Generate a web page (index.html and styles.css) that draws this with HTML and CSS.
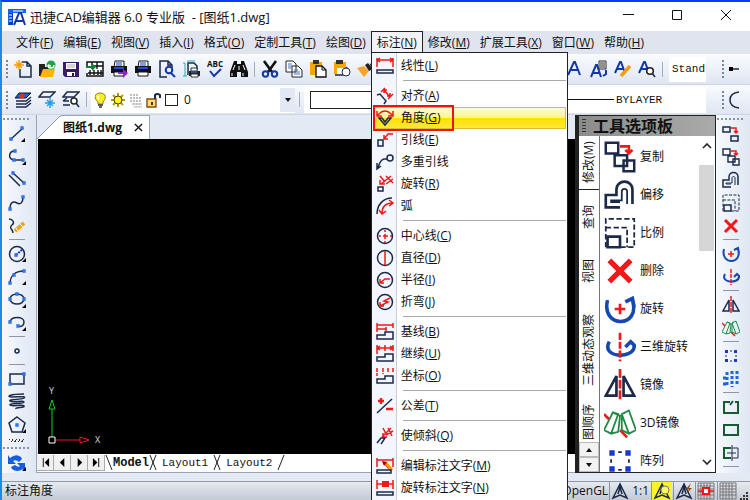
FILE: index.html
```
<!DOCTYPE html>
<html lang="zh-CN">
  <head>
    <meta charset="UTF-8" />
    <meta name="viewport" content="width=device-width, initial-scale=1.0" />
    <title>迅捷CAD编辑器 6.0 专业版 - [图纸1.dwg]</title>
    <link rel="stylesheet" href="styles.css">
  </head>
  <body>
    <!-- icon set -->
    <svg class="defs" aria-hidden="true">
      <symbol id="logo" viewBox="0 0 18 18"><path d="M0 1h18v4H5v12H0z" fill="#1565e8"/><path d="M1 5h4v12H1z" fill="#0a3cc8"/><path d="M1 7h3M1 10h3M1 13h3M5 3h10" stroke="#fff"/><path class="b" d="M6 17L11 5h2l4 12M8 13h8" stroke-width="2.5"/></symbol>
      <symbol id="new" viewBox="0 0 18 18"><path class="k" d="M8 2h5l4 4v11H6V9M13 2v4h4"/><path d="M5 0v10M0 5h10M2 2l6 6M8 2L2 8" stroke="#ff9a00" stroke-width="1.4"/></symbol>
      <symbol id="open" viewBox="0 0 18 18"><path d="M1 4h6v3h8v9H1z" fill="#222"/><path d="M2 17l3-8h12l-2 8z" fill="#ffb400"/><circle cx="13" cy="5" r="4.5" fill="#21a04a"/><path d="M10 5a3 3 0 0 0 6 0M10 5l3 1" stroke="#fff" fill="none" stroke-width="1.4"/></symbol>
      <symbol id="save" viewBox="0 0 18 18"><path d="M1 2h16v15H3l-2-2z" fill="#3b1a66"/><path d="M4 3h10v6H4zM5 12h8v4H5z" fill="#fff"/><path d="M5 5h8M5 7h8" stroke="#aaa"/><path d="M10 13h2v3h-2z" fill="#222"/></symbol>
      <symbol id="acis" viewBox="0 0 18 18"><path d="M1 7V2h16v14H1v-3" fill="#fff" stroke="#111" stroke-width="1.5"/><path d="M6 2v7M11 2v7M6 6h11M2 13h15M4 10v5M8 10v5M12 10v5M15 10v5" stroke="#111" stroke-width="1.4"/><path d="M0 6h6V3l4 4-4 4V8H0z" fill="#128038"/></symbol>
      <symbol id="print" viewBox="0 0 18 18"><path d="M5 1h9v6H4z" fill="#fff" stroke="#111"/><path d="M6 3h6M6 5h6" stroke="#1a36c8"/><path d="M1 6h16v7H1z" fill="#111"/><path d="M4 7h10v2H4z" fill="#1f4be0"/><path d="M4 12h10v4H4z" fill="#fff" stroke="#111"/></symbol>
      <symbol id="export" viewBox="0 0 18 18"><use href="#print" width="18" height="18"/><path d="M8 12h5V9l5 4-5 5v-4H8z" fill="#8a28c8"/></symbol>
      <symbol id="preview" viewBox="0 0 18 18"><path class="k" d="M9 17H2V1h8l4 4v3M10 1v4h4"/><circle class="b" cx="11" cy="10" r="3.3" stroke-width="2"/><path class="b" d="M13 13l4 4" stroke-width="2.4"/></symbol>
      <symbol id="plot" viewBox="0 0 18 18"><path d="M3 3v13M1 3h2M1 16h4M5 1h8" stroke="#20a8c0" fill="none"/><path class="k" d="M6 15V3h6l3 3v4" stroke-width="1"/><path d="M7 11h11v5H7z" fill="#222"/><path d="M9 8h6v3H9zM9 14h7v3H9z" fill="#fff" stroke="#333"/><path d="M9 12h6" stroke="#2e7be8"/></symbol>
      <symbol id="find" viewBox="0 0 18 18"><path d="M4 1h3v3h4V1h3l4 11v5h-7v-5H7v5H0v-5z" fill="#111"/><path d="M3 10l2-5M15 10l-2-5M2 13v3M13 13v3M9 6v4" stroke="#fff"/></symbol>
      <symbol id="cut" viewBox="0 0 18 18"><path d="M3 1l8 11M15 1L7 12" stroke="#111" stroke-width="2.6"/><circle class="b" cx="4.5" cy="14" r="2.7" stroke-width="2"/><circle class="b" cx="13.5" cy="14" r="2.7" stroke-width="2"/></symbol>
      <symbol id="copy" viewBox="0 0 18 18"><path d="M1 1h7l3 3v8H1zM7 6h6l4 4v7H7z" fill="#fff" stroke="#222"/><path d="M3 4h4M3 6h4M3 8h3M9 10h4M9 12h6M9 14h6" stroke="#4672c8"/></symbol>
      <symbol id="paste" viewBox="0 0 18 18"><path d="M1 2h12v13H1z" fill="#f5a800"/><path d="M4 0h6v4H4z" fill="#333"/><path d="M7 6h6l4 4v7H7z" fill="#fff" stroke="#111" stroke-width="1.3"/><path d="M13 6v4h4" fill="none" stroke="#111"/></symbol>
      <symbol id="pasteb" viewBox="0 0 18 18"><path d="M1 2h12v12H1z" fill="#f5a800"/><path d="M3 0h7v4H3z" fill="#333"/><path d="M4 8h8v6H4z" fill="#fff"/><path class="k" d="M2 15h8l4-8"/><circle cx="13" cy="12" r="4" fill="#fff" stroke="#1b2a4a"/></symbol>
      <symbol id="brush" viewBox="0 0 18 18"><path d="M0 8l7-2 5 5-5 6z" fill="#f5a52a"/><path d="M8 5l3-2 5 6-4 2z" fill="#222"/><path d="M13 4l4-2 1 3-4 2z" fill="#111"/></symbol>
      <symbol id="ta" viewBox="0 0 18 18"><path class="b" d="M2 15L8 2h1l5 13M4 10h9" stroke-width="2.7"/></symbol>
      <symbol id="tb" viewBox="0 0 18 18"><path class="b" d="M1 17L6 5h1l4 12M3 13h7" stroke-width="2.7"/><path d="M9 1h7v8H9z" fill="#fff" stroke="#222"/><path d="M10 3h5M10 5h5M10 7h5" stroke="#222"/><path class="b" d="M16 10v4l-3 2"/></symbol>
      <symbol id="tc" viewBox="0 0 18 18"><path class="b" d="M1 13L6 2h1l4 11M3 9h7" stroke-width="2.7"/><path d="M7 16l9-10" stroke="#f59a13" stroke-width="3.5"/></symbol>
      <symbol id="td" viewBox="0 0 18 18"><path class="b" d="M1 13L6 2h1l4 11M3 9h7" stroke-width="2.7"/><circle cx="12" cy="11" r="3.3" fill="#fff" stroke="#222" stroke-width="1.6"/><path class="k" d="M14 13l3 4" stroke-width="2"/></symbol>
      <symbol id="layers" viewBox="0 0 18 18"><path d="M5 2h12l-5 5H1z" fill="#1c62d8" stroke="#111"/><circle cx="8" cy="5" r="2.5" fill="#e82a20"/><path class="k" d="M2 10h10l5-4M2 13h10l5-4M2 16h10l5-4"/></symbol>
      <symbol id="freeze" viewBox="0 0 18 18"><path class="k" d="M5 1h12l-5 5H1z" stroke-width="1.2"/><path d="M12 7v10M7 12h10M9 9l6 6M15 9l-6 6" stroke="#1ea0e8" stroke-width="1.4"/></symbol>
      <symbol id="laysearch" viewBox="0 0 18 18"><path class="k" d="M5 1h12l-5 5H1zM1 10l4-3M1 10h6M1 14h7" stroke-width="1.2"/><circle cx="12" cy="10" r="3" fill="#fff" stroke="#222" stroke-width="1.5"/><path class="k" d="M14 12l3 4" stroke-width="2"/></symbol>
      <symbol id="bulb" viewBox="0 0 18 18"><path d="M9 2c7 0 6 6 3 9v2H7v-2C3 8 3 2 9 2z" fill="#ffee20" stroke="#8c8420"/><path d="M7 14h5M8 16h3" stroke="#333" stroke-width="1.5"/><path d="M7 5v3" stroke="#fff" stroke-width="2"/></symbol>
      <symbol id="sun" viewBox="0 0 18 18"><path d="M9 2v14M2 9h14M4 4l10 10M14 4L4 14" stroke="#b99b00" stroke-width="2"/><circle cx="9" cy="9" r="4" fill="#fff030" stroke="#4a4200"/></symbol>
      <symbol id="mesh" viewBox="0 0 18 18"><path d="M3 4h8M3 7h12M3 10h12M5 13h10M8 16h7M4 3v9M7 3v13M10 3v13M13 6v10" stroke="#aaa" stroke-dasharray="2 1"/></symbol>
      <symbol id="lock" viewBox="0 0 18 18"><path d="M2 8h9v8H2z" fill="#ffe07a" stroke="#8a4a10" stroke-width="1.4"/><path d="M10 8V4q2-2 5 0v3" fill="none" stroke="#1b2a4a" stroke-width="2"/><path d="M7 11v3" stroke="#5a2a00" stroke-width="2"/></symbol>

      <symbol id="line" viewBox="0 0 18 18"><path class="k" d="M3 14L15 3" stroke-width="2"/><path class="p" d="M2 13h2v2H2zM13 2h2v2h-2z"/><path d="M17 13v4h-4z"/></symbol>
      <symbol id="pline" viewBox="0 0 18 18"><path class="k" d="M7 3C0 3 0 12 6 12h9"/><path class="p" d="M6 2h2v2H6zM5 11h2v2H5zM14 11h2v2h-2z"/><path d="M18 13v4h-4z"/></symbol>
      <symbol id="mline" viewBox="0 0 18 18"><path class="k" d="M1 4l11 11M5 2l11 10" stroke-width="2"/><path class="p" d="M4 1h2v2H4zM15 11h2v2h-2z"/></symbol>
      <symbol id="spline" viewBox="0 0 18 18"><path class="k" d="M2 15C2 6 7 8 9 9c4 2 6-1 6-6"/><path class="p" d="M1 14h2v2H1zM14 2h2v2h-2z"/></symbol>
      <symbol id="sketch" viewBox="0 0 18 18"><path class="k" d="M1 2c4 0 6 4 3 6-4 3 1 4 1 8" stroke-width="2"/><path d="M7 14l9-8" stroke="#f5a20e" stroke-width="4"/><path d="M12 7l3 3M8 11l2 3" stroke="#fff"/></symbol>
      <symbol id="circle" viewBox="0 0 18 18"><circle class="k" cx="9" cy="9" r="7.5"/><path class="b" d="M8 10l7-6" stroke-width="1" stroke-dasharray="2 1"/><path class="p" d="M7 9h2v2H7z"/><path d="M18 13v4h-4z"/></symbol>
      <symbol id="arc" viewBox="0 0 18 18"><path class="k" d="M2 16C2 8 7 3 16 3"/><path class="p" d="M1 14h2v2H1zM5 6h2v2H5zM15 2h2v2h-2z"/><path d="M18 13v4h-4z"/></symbol>
      <symbol id="ellipse" viewBox="0 0 18 18"><ellipse class="k" cx="9" cy="8" rx="7" ry="5"/><path class="p" d="M8 2h2v2H8zM1 7h2v2H1zM15 7h2v2h-2z"/><path d="M18 13v4h-4z"/></symbol>
      <symbol id="earc" viewBox="0 0 18 18"><path class="k" d="M2 8C3 2 16 2 16 8c0 4-3 5-6 4"/><path class="p" d="M1 7h2v2H1zM9 11h2v2H9z"/><path d="M18 13v4h-4z"/></symbol>
      <symbol id="point" viewBox="0 0 18 18"><circle class="k" cx="9" cy="9" r="2" stroke-width="1.8"/></symbol>
      <symbol id="rect" viewBox="0 0 18 18"><path class="k" d="M2 4h14v10H2z"/><path class="p" d="M15 3h2v2h-2zM1 13h2v2H1z"/></symbol>
      <symbol id="helix" viewBox="0 0 18 18"><path class="k" d="M16 1C1 1-2 4 4 4s15-1 12 1S0 6 2 8s14-1 14 1S1 10 2 12s13-1 14 1-9 1-8 3"/></symbol>
      <symbol id="polygon" viewBox="0 0 18 18"><path class="k" d="M9 1l8 6-3 9H4L1 7z" stroke-width="1.3"/><path class="p" d="M8 8h2v2H8z"/><path d="M18 13v4h-4z"/></symbol>
      <symbol id="redo" viewBox="0 0 18 18"><path d="M0 1l2 3q6-5 11-1l1 2-3 3q-3-3-6-1l3 3H0zM17 17l-2-2q-6 4-11 0l-1-2 4-2q3 3 5 1l-3-3h8z" fill="#155edc"/><path d="M18 13v4h-4z"/></symbol>

      <symbol id="d-line" viewBox="0 0 18 18"><path class="r" d="M1 1v9M17 1v9M2 3h14M4 1L1 3l3 2M14 1l3 2-3 2"/><path class="k" d="M1 13h16v3H1z"/></symbol>
      <symbol id="d-align" viewBox="0 0 18 18"><path class="r" d="M5 5l4-4M12 12l5-5M8 3l6 7M8 6V3h3M11 9h3V6"/><path class="k" d="M1 8l3-1 6 7-2 3" stroke-width="2"/></symbol>
      <symbol id="d-angle" viewBox="0 0 18 18"><path class="r" d="M2 6Q9-2 16 6M1 2v5h5M17 2v5h-5"/><path class="k" d="M3 9l6 7 6-7h-3l-3 4-3-4z"/></symbol>
      <symbol id="d-leader" viewBox="0 0 18 18"><path class="k" d="M2 9h5v6H2z"/><path class="r" d="M8 8l4-5h5M8 4v4h4"/></symbol>
      <symbol id="d-mleader" viewBox="0 0 18 18"><circle class="k" cx="14" cy="5" r="3"/><path class="k" d="M11 6H8Q4 7 2 15M1 10v6l4-3"/></symbol>
      <symbol id="d-rotate" viewBox="0 0 18 18"><path class="k" d="M2 12h5v4H2z"/><path class="r" d="M4 1l5 6M15 1L5 9M10 1l7 7M17 4l-7 5M4 5v4h5"/></symbol>
      <symbol id="d-arc" viewBox="0 0 18 18"><path class="k" d="M1 17C1 8 7 1 16 1"/><path class="r" d="M6 16C6 10 9 6 17 6M13 3l4 3-4 3M3 13l3 4 4-3"/></symbol>
      <symbol id="d-center" viewBox="0 0 18 18"><circle class="k" cx="9" cy="9" r="7.5"/><path class="r" d="M9 3v2M9 7v5M9 14v2M3 9h2M7 9h5M14 9h2"/></symbol>
      <symbol id="d-dia" viewBox="0 0 18 18"><circle class="k" cx="9" cy="9" r="7.5"/><path class="r" d="M9 2v14" stroke-width="2"/></symbol>
      <symbol id="d-radius" viewBox="0 0 18 18"><circle class="k" cx="9" cy="9" r="7.500"/><path class="r" d="M4 12l5-4h5M4 8v4h4"/></symbol>
      <symbol id="d-jog" viewBox="0 0 18 18"><circle class="k" cx="9" cy="9" r="7.500"/><path class="r" d="M14 5L8 8l4 1-8 4M4 9v4h4"/></symbol>
      <symbol id="d-base" viewBox="0 0 18 18"><path class="r" d="M1 0v9M17 0v5M1 2h16M1 6h9M10 4v4"/><path class="k" d="M1 12h8V9h8v7H1z"/></symbol>
      <symbol id="d-cont" viewBox="0 0 18 18"><path class="r" d="M1 0v9M9 0v6M17 0v6M1 3h16M4 1L1 3l3 2M14 1l3 2-3 2"/><path class="k" d="M1 12h8V9h8v7H1z"/></symbol>
      <symbol id="d-ord" viewBox="0 0 18 18"><path class="r" d="M1 1v8M7 1v6M12 1v5M17 1v5" stroke-dasharray="4 1"/><path class="k" d="M1 12h8V9h8v7H1z"/></symbol>
      <symbol id="d-tol" viewBox="0 0 18 18"><path class="k" d="M1 16L16 2"/><path class="r heavy" d="M2 4h6M5 1v6M10 12h7"/></symbol>
      <symbol id="d-obl" viewBox="0 0 18 18"><path class="r" d="M7 1l3 6M15 1L6 10M12 1l4 8M17 4l-7 4M7 6v4h4"/><path class="k" d="M1 16l4-5h4l-4 6"/></symbol>
      <symbol id="d-edit" viewBox="0 0 18 18"><path class="r" d="M1 1v9M17 1v9M1 3h16M8 6l6 7"/><path d="M8 6l3-1 6 7-2 3z" fill="#f59a13"/><path d="M6 4l5 1-3 4z" fill="#900"/><path class="k" d="M1 13h14v3H1z"/></symbol>
      <symbol id="d-text" viewBox="0 0 18 18"><path class="r" d="M1 1v9M17 1v9M1 5h16"/><path d="M6 2h7v6H6z" fill="#f01818"/><path class="k" d="M1 13h16v3H1z"/></symbol>

      <symbol id="m-copy" viewBox="0 0 18 18"><path class="k" d="M1 2h7v5H1zM9 11h7v5H9z"/><path class="r" d="M9 3h5v4M12 6l2 2 2-2"/></symbol>
      <symbol id="m-copy3" viewBox="0 0 18 18"><path d="M1 1h7v6H1zM6 8h7v6H6zM11 11h6v6h-6z" fill="#fff" stroke="#1b2a4a" stroke-width="1.4"/><path class="r" d="M9 3h5v4M12 5l2 2 2-2"/></symbol>
      <symbol id="m-offset" viewBox="0 0 18 18"><path class="k" d="M9 16H1V9h6V6c0-6 9-6 9 0v8"/><path class="k thin" d="M9 13H4v-1h6V7c0-2 3-2 3 0v7"/></symbol>
      <symbol id="m-scale" viewBox="0 0 18 18"><path class="k thin" d="M1 17V1h16v16H9" stroke-dasharray="3 1.4"/><path class="k thin" d="M1 6h12v11" stroke-dasharray="3 1.4"/><path class="k" d="M2 11h7v6H2z"/></symbol>
      <symbol id="m-del" viewBox="0 0 18 18"><path d="M3 3l12 12M15 3L3 15" stroke="#f01818" stroke-width="3"/></symbol>
      <symbol id="m-rot" viewBox="0 0 18 18"><path d="M2 4c-4 16 19 16 14 0M12 5l4-2 1 5" fill="none" stroke="#1748b0" stroke-width="2"/><path class="r" d="M9 6v6M6 9h6"/></symbol>
      <symbol id="m-rot3" viewBox="0 0 18 18"><path d="M3 6c-5 9 13 10 14 3 0-2-1-2-2-3M12 9l3-3 3 3" fill="none" stroke="#1748b0" stroke-width="2"/><path class="r" d="M9 1v16" stroke-dasharray="4 1"/></symbol>
      <symbol id="m-mir" viewBox="0 0 18 18"><path class="k" d="M7 4v11H1zM11 4v11h6z"/><path class="r" d="M9 0v18" stroke-dasharray="5 1"/></symbol>
      <symbol id="m-mir3" viewBox="0 0 18 18"><path class="r" d="M0 4l3 3M9 13l4 4"/><path d="M5 3l3 1-4 11-4-2zM5 3l4 2-1 9-4 1M10 4l4-2 4 11-4 2zM10 4v9l4 2M10 4l2-1" fill="none" stroke="#1f8a45"/></symbol>
      <symbol id="m-arr" viewBox="0 0 18 18"><path d="M3 3h3v3H3zM12 3h3v3h-3zM3 12h3v3H3zM12 12h3v3h-3z" fill="#1738d0"/><path class="k thin" d="M8 4h2M8 14h2M4 8v2M14 8v2"/></symbol>
      <symbol id="m-arr2" viewBox="0 0 18 18"><path d="M5 2v15M10 1v16M15 1v14M1 8h4M1 14h4" fill="none" stroke="#1e66e0" stroke-width="3" stroke-dasharray="3 2"/></symbol>
      <symbol id="m-break" viewBox="0 0 18 18"><path d="M8 4H2v11h14V4h-3M8 7l3-4" fill="none" stroke="#175a34" stroke-width="2"/></symbol>
      <symbol id="m-box" viewBox="0 0 18 18"><path d="M2 4h14v10H2z" fill="none" stroke="#175a34" stroke-width="2"/></symbol>
      <symbol id="m-trim" viewBox="0 0 18 18"><path d="M9 4H2v10h7" fill="none" stroke="#175a34" stroke-width="2"/><path class="k thin" d="M10 1v16M10 4h6v10h-6M5 9h9"/></symbol>
      <symbol id="s-tri" viewBox="0 0 18 18"><path class="k" d="M9 2L5 10l-3 6 7-3 7 3-3-6zM7 12L9 5l2 7"/></symbol>
      <symbol id="s-grid" viewBox="0 0 18 18"><path d="M1 1h16v16H1zM1 4h16M1 7h16M1 10h16M1 13h16M4 1v16M7 1v16M10 1v16M13 1v16" fill="none" stroke="#777"/></symbol>
      <symbol id="s-snap" viewBox="0 0 18 18"><use href="#s-grid" width="18" height="18"/><path class="r" d="M1 9h16"/><path d="M6 6h6v6H6z" fill="#fff" stroke="#f01818" stroke-width="2"/></symbol>
    </svg>

    <header class="titlebar">
      <svg class="icon"><use href="#logo"/></svg>
      <h1>迅捷CAD编辑器 6.0 专业版 &nbsp;- [图纸1.dwg]</h1>
      <div class="window-buttons">
        <button aria-label="最小化"><svg viewBox="0 0 12 12"><path d="M1 5.5h11"/></svg></button>
        <button aria-label="最大化"><svg viewBox="0 0 12 12"><path d="M1.5 1.5h9v9h-9z"/></svg></button>
        <button aria-label="关闭"><svg viewBox="0 0 12 12"><path d="M1 1l10 10M11 1L1 11"/></svg></button>
      </div>
    </header>

    <nav class="menubar">
      <button>文件(<u>F</u>)</button>
      <button>编辑(<u>E</u>)</button>
      <button>视图(<u>V</u>)</button>
      <button>插入(<u>I</u>)</button>
      <button>格式(<u>O</u>)</button>
      <button>定制工具(<u>T</u>)</button>
      <button>绘图(<u>D</u>)</button>
      <div class="menu-open">
        <button>标注(<u>N</u>)</button>
        <div class="dropdown">
          <button><svg class="icon"><use href="#d-line"/></svg><span>线性(<u>L</u>)</span></button>
          <hr>
          <button><svg class="icon"><use href="#d-align"/></svg><span>对齐(<u>A</u>)</span></button>
          <button class="active"><svg class="icon"><use href="#d-angle"/></svg><span>角度(<u>G</u>)</span></button>
          <button><svg class="icon"><use href="#d-leader"/></svg><span>引线(<u>E</u>)</span></button>
          <button><svg class="icon"><use href="#d-mleader"/></svg><span>多重引线</span></button>
          <button><svg class="icon"><use href="#d-rotate"/></svg><span>旋转(<u>R</u>)</span></button>
          <button><svg class="icon"><use href="#d-arc"/></svg><span>弧</span></button>
          <hr>
          <button><svg class="icon"><use href="#d-center"/></svg><span>中心线(<u>C</u>)</span></button>
          <button><svg class="icon"><use href="#d-dia"/></svg><span>直径(<u>D</u>)</span></button>
          <button><svg class="icon"><use href="#d-radius"/></svg><span>半径(<u>I</u>)</span></button>
          <button><svg class="icon"><use href="#d-jog"/></svg><span>折弯(<u>J</u>)</span></button>
          <hr>
          <button><svg class="icon"><use href="#d-base"/></svg><span>基线(<u>B</u>)</span></button>
          <button><svg class="icon"><use href="#d-cont"/></svg><span>继续(<u>U</u>)</span></button>
          <button><svg class="icon"><use href="#d-ord"/></svg><span>坐标(<u>O</u>)</span></button>
          <hr>
          <button><svg class="icon"><use href="#d-tol"/></svg><span>公差(<u>T</u>)</span></button>
          <hr>
          <button><svg class="icon"><use href="#d-obl"/></svg><span>使倾斜(<u>Q</u>)</span></button>
          <hr>
          <button><svg class="icon"><use href="#d-edit"/></svg><span>编辑标注文字(<u>M</u>)</span></button>
          <button><svg class="icon"><use href="#d-text"/></svg><span>旋转标注文字(<u>N</u>)</span></button>
        </div>
      </div>
      <button>修改(<u>M</u>)</button>
      <button>扩展工具(<u>X</u>)</button>
      <button>窗口(<u>W</u>)</button>
      <button>帮助(<u>H</u>)</button>
    </nav>

    <div class="toolbar">
      <div class="tools">
        <i class="grip"></i>
        <button aria-label="新建"><svg class="icon"><use href="#new"/></svg></button>
        <button aria-label="打开"><svg class="icon"><use href="#open"/></svg></button>
        <button aria-label="保存"><svg class="icon"><use href="#save"/></svg></button>
        <button aria-label="输入ACIS"><svg class="icon"><use href="#acis"/></svg></button>
        <button aria-label="输出"><svg class="icon"><use href="#export"/></svg></button>
        <button aria-label="打印"><svg class="icon"><use href="#print"/></svg></button>
        <button aria-label="打印预览"><svg class="icon"><use href="#preview"/></svg></button>
        <button aria-label="打印样式"><svg class="icon"><use href="#plot"/></svg></button>
        <button class="spell" aria-label="拼写检查">ABC<svg viewBox="0 0 18 10"><path class="b" d="M4 3l4 5 7-7" stroke-width="2.6"/></svg></button>
        <button aria-label="查找"><svg class="icon"><use href="#find"/></svg></button>
        <i class="divider"></i>
        <button aria-label="剪切"><svg class="icon"><use href="#cut"/></svg></button>
        <button aria-label="复制"><svg class="icon"><use href="#copy"/></svg></button>
        <button aria-label="粘贴"><svg class="icon"><use href="#paste"/></svg></button>
        <button aria-label="粘贴为块"><svg class="icon"><use href="#pasteb"/></svg></button>
        <button aria-label="特性匹配"><svg class="icon"><use href="#brush"/></svg></button>
      </div>
      <div class="tools text-tools">
        <button aria-label="单行文字"><svg class="icon"><use href="#ta"/></svg></button>
        <button aria-label="多行文字"><svg class="icon"><use href="#tb"/></svg></button>
        <button aria-label="编辑文字"><svg class="icon"><use href="#tc"/></svg></button>
        <button aria-label="查找文字"><svg class="icon"><use href="#td"/></svg></button>
        <i class="divider"></i>
        <select class="style-select" aria-label="文字样式"><option>Stand</option></select>
      </div>
      <div class="tools dock">
        <i class="grip"></i>
        <svg class="icon"><path class="k" d="M6 9h8"/><path d="M4 7h4v4H4z"/></svg>
      </div>
    </div>

    <div class="toolbar props">
      <div class="tools">
        <i class="grip"></i>
        <button aria-label="图层"><svg class="icon"><use href="#layers"/></svg></button>
        <button aria-label="冻结图层"><svg class="icon"><use href="#freeze"/></svg></button>
        <button aria-label="查找图层"><svg class="icon"><use href="#laysearch"/></svg></button>
        <i class="divider"></i>
      </div>
      <div class="combo layer-combo">
        <svg class="icon"><use href="#bulb"/></svg>
        <svg class="icon"><use href="#sun"/></svg>
        <svg class="icon"><use href="#mesh"/></svg>
        <svg class="icon"><use href="#lock"/></svg>
        <i class="swatch"></i>
        <select aria-label="当前图层"><option>0</option></select>
        <b class="arrow"></b>
      </div>
      <i class="divider"></i>
      <div class="combo line-combo">
        <i class="color"></i>
        <i class="rule"></i>
        <select aria-label="线型"><option>BYLAYER</option></select>
      </div>
      <div class="tools dock">
        <i class="grip"></i>
        <svg class="icon"><path class="k" d="M14 1Q5 2 5 9t9 8"/></svg>
      </div>
    </div>

    <main class="workspace">
      <div class="sidebar">
        <i class="dots"></i>
        <button aria-label="直线"><svg class="icon"><use href="#line"/></svg></button>
        <button aria-label="多段线"><svg class="icon"><use href="#pline"/></svg></button>
        <button aria-label="多线"><svg class="icon"><use href="#mline"/></svg></button>
        <button aria-label="样条曲线"><svg class="icon"><use href="#spline"/></svg></button>
        <button aria-label="徒手画"><svg class="icon"><use href="#sketch"/></svg></button>
        <hr>
        <button aria-label="圆"><svg class="icon"><use href="#circle"/></svg></button>
        <button aria-label="圆弧"><svg class="icon"><use href="#arc"/></svg></button>
        <button aria-label="椭圆"><svg class="icon"><use href="#ellipse"/></svg></button>
        <button aria-label="椭圆弧"><svg class="icon"><use href="#earc"/></svg></button>
        <hr>
        <button aria-label="点"><svg class="icon"><use href="#point"/></svg></button>
        <hr>
        <button aria-label="矩形"><svg class="icon"><use href="#rect"/></svg></button>
        <button aria-label="螺旋"><svg class="icon"><use href="#helix"/></svg></button>
        <button aria-label="多边形"><svg class="icon"><use href="#polygon"/></svg></button>
        <i class="hatch"></i>
        <i class="dots"></i>
        <button aria-label="重做"><svg class="icon"><use href="#redo"/></svg></button>
      </div>

      <section class="drawing">
        <div class="doc-tabs">
          <svg class="slope" viewBox="0 0 26 24"><path d="M0 24L22 2q2-2 4-2v24z" fill="#fff"/><path d="M0 24L22 2q2-1.500 4-1.500" fill="none" stroke="#8e98a8"/></svg>
          <div class="doc-tab">图纸1.dwg <button aria-label="关闭图纸"><svg viewBox="0 0 10 10"><path d="M1 1l8 8M9 1L1 9"/></svg></button></div>
        </div>
        <div class="canvas">
          <svg class="ucs" viewBox="0 0 60 64">
            <path d="M6 53V25M3 25l3-9 3 9z" fill="none" stroke="#10d020"/>
            <path d="M9 56h25M34 53l9 3-9 3z" fill="none" stroke="#f01818"/>
            <path d="M3 53h6v6H3z" fill="none" stroke="#fff"/>
            <text x="3" y="10">Y</text>
            <text x="49" y="59">X</text>
          </svg>
        </div>
        <div class="sheets">
          <button class="nav" aria-label="第一页"><svg viewBox="0 0 10 10"><path d="M2 0v10h1V0zM9 0v10L4 5z"/></svg></button>
          <button class="nav" aria-label="上一页"><svg viewBox="0 0 10 10"><path d="M7 0v10L2 5z"/></svg></button>
          <button class="nav" aria-label="下一页"><svg viewBox="0 0 10 10"><path d="M3 0v10l5-5z"/></svg></button>
          <button class="nav" aria-label="最后一页"><svg viewBox="0 0 10 10"><path d="M1 0v10l5-5zM7 0v10h1V0z"/></svg></button>
          <svg class="edge"><path d="M1 0l6 15"/></svg>
          <button class="sheet current">Model</button>
          <svg class="edge"><path d="M7 0L1 15M1 0l6 15"/></svg>
          <button class="sheet">Layout1</button>
          <svg class="edge"><path d="M7 0L1 15M1 0l6 15"/></svg>
          <button class="sheet">Layout2</button>
          <svg class="edge"><path d="M7 0L1 15"/></svg>
        </div>
      </section>

      <aside class="palette">
        <h2><i class="grip"></i>工具选项板</h2>
        <div class="palette-body">
          <div class="palette-tabs">
            <button class="selected">修改(M)</button>
            <button>查询</button>
            <button>视图</button>
            <button class="long">三维动态观察</button>
            <button class="last">图顺序</button>
            <div class="spin">
              <button aria-label="上移"><b class="arrow up"></b></button>
              <button aria-label="下移"><b class="arrow"></b></button>
            </div>
          </div>
          <div class="palette-list">
            <button><svg><use href="#m-copy3"/></svg>复制</button>
            <button><svg><use href="#m-offset"/></svg>偏移</button>
            <button><svg><use href="#m-scale"/></svg>比例</button>
            <button><svg><use href="#m-del"/></svg>删除</button>
            <button><svg><use href="#m-rot"/></svg>旋转</button>
            <button><svg><use href="#m-rot3"/></svg>三维旋转</button>
            <button><svg><use href="#m-mir"/></svg>镜像</button>
            <button><svg><use href="#m-mir3"/></svg>3D镜像</button>
            <button><svg><use href="#m-arr"/></svg>阵列</button>
          </div>
          <div class="scroll">
            <svg viewBox="0 0 10 6"><path d="M1 5l4-4 4 4"/></svg>
            <i class="thumb"></i>
            <svg viewBox="0 0 10 6"><path d="M1 1l4 4 4-4"/></svg>
          </div>
        </div>
      </aside>

      <div class="sidebar right">
        <i class="dots"></i>
        <button aria-label="复制"><svg class="icon"><use href="#m-copy"/></svg></button>
        <button aria-label="多重复制"><svg class="icon"><use href="#m-copy3"/></svg></button>
        <button aria-label="偏移"><svg class="icon"><use href="#m-offset"/></svg></button>
        <button aria-label="比例"><svg class="icon"><use href="#m-scale"/></svg></button>
        <button aria-label="删除"><svg class="icon"><use href="#m-del"/></svg></button>
        <hr>
        <button aria-label="旋转"><svg class="icon"><use href="#m-rot"/></svg></button>
        <button aria-label="三维旋转"><svg class="icon"><use href="#m-rot3"/></svg></button>
        <hr>
        <button aria-label="镜像"><svg class="icon"><use href="#m-mir"/></svg></button>
        <button aria-label="3D镜像"><svg class="icon"><use href="#m-mir3"/></svg></button>
        <hr>
        <button aria-label="阵列"><svg class="icon"><use href="#m-arr"/></svg></button>
        <button aria-label="三维阵列"><svg class="icon"><use href="#m-arr2"/></svg></button>
        <hr>
        <button aria-label="打断"><svg class="icon"><use href="#m-break"/></svg></button>
        <button aria-label="合并"><svg class="icon"><use href="#m-box"/></svg></button>
        <button aria-label="修剪"><svg class="icon"><use href="#m-trim"/></svg></button>
        <hr>
      </div>
    </main>

    <footer class="statusbar">
      <span class="hint">标注角度</span>
      <span>OpenGL</span>
      <button><svg class="icon"><use href="#s-tri"/></svg>1:1</button>
      <button class="on" aria-label="注释可见性"><svg class="icon"><use href="#s-tri"/><circle cx="12" cy="8" r="4" fill="#fff86a" stroke="#777"/></svg></button>
      <button aria-label="自动缩放"><svg class="icon"><use href="#s-tri"/><path d="M16 1l-5 6h3l-3 5 6-6h-3z" fill="#8a4a10"/></svg></button>
      <button aria-label="捕捉"><svg class="icon"><use href="#s-snap"/></svg></button>
      <button aria-label="栅格"><svg class="icon"><use href="#s-grid"/></svg></button>
      <svg class="resize" viewBox="0 0 9 9"><path d="M7 1h2v2H7zM7 4h2v2H7zM7 7h2v2H7zM4 4h2v2H4zM4 7h2v2H4zM1 7h2v2H1z"/></svg>
    </footer>
  </body>
</html>
```

FILE: styles.css
```
* {
  box-sizing: border-box;
}
body {
  margin: 0;
  height: 100vh;
  display: flex;
  flex-direction: column;
  overflow: hidden;
  border-top: 2px solid #0a3cf5;
  border-left: 2px solid #1e8ae6;
  background: #e4eaf4;
  color: #111;
  font-family: 'Open Sans', 'Noto Sans CJK SC', sans-serif;
  font-size: 12px;
  line-height: 16px;
}
button,
select {
  font: inherit;
  color: inherit;
  border: 0;
  margin: 0;
  padding: 0;
  background: none;
  appearance: none;
}
h1,
h2 {
  margin: 0;
  font-size: 13px;
  font-weight: normal;
}
u {
  text-underline-offset: 1px;
}
.defs {
  position: absolute;
  width: 0;
  height: 0;
}
.icon {
  display: block;
  flex: none;
  width: 18px;
  height: 18px;
}
.k {
  fill: none;
  stroke: #1b2a4a;
  stroke-width: 1.5;
}
.thin {
  stroke-width: 1;
}
.r {
  fill: none;
  stroke: #f01818;
  stroke-width: 1.5;
}
.heavy {
  stroke-width: 2.4;
}
.b {
  fill: none;
  stroke: #1238a8;
  stroke-width: 2;
}
.p {
  fill: #fff;
  stroke: #2468e8;
  stroke-width: 1.3;
}

/* title */
.titlebar {
  display: flex;
  align-items: center;
  flex: none;
  height: 29px;
  padding-left: 6px;
  gap: 4px;
  background: #fff;
}
.window-buttons {
  display: flex;
  margin-left: auto;
}
.window-buttons button {
  width: 49px;
  height: 28px;
}
.window-buttons svg {
  width: 12px;
  height: 12px;
  fill: none;
  stroke: #111;
}

/* menu */
.menubar {
  display: flex;
  flex: none;
  height: 23px;
  padding-left: 9px;
  background: #dfe4ee;
}
.menubar > button,
.menu-open > button {
  padding: 0 5px;
  white-space: nowrap;
}
.menu-open {
  position: relative;
  z-index: 5;
}
.menu-open > button {
  height: 23px;
  background: #f1f3f8;
  border: 1px solid #222;
  border-bottom: 0;
}
.dropdown {
  position: absolute;
  top: 21px;
  left: 0;
  width: 197px;
  padding: 2px 1px;
  border: 1px solid #222;
  background: linear-gradient(90deg, #f3f6fc 24px, #c9ced6 24px, #c9ced6 25px, #fff 25px);
}
.dropdown button {
  display: flex;
  align-items: center;
  position: relative;
  width: 100%;
  height: 22px;
  padding-left: 3px;
  gap: 7px;
}
.dropdown hr {
  margin: 3px 0 4px 30px;
  border: 0;
  border-top: 1px solid #aaa;
}
.dropdown .active {
  background: linear-gradient(#fffce0, #fff38a 48%, #ffe000 50%, #ffe93c);
  outline: 1px solid #dcbc3c;
  outline-offset: -1px;
}
.dropdown .active::after {
  content: '';
  position: absolute;
  inset: -2px auto -2px 0;
  width: 77px;
  border: 2px solid #f01010;
}

/* toolbars */
.toolbar {
  display: flex;
  align-items: center;
  flex: none;
  height: 31px;
  border-bottom: 1px solid #cdd5e2;
  background: linear-gradient(#f9fbfe, #dfe6f2);
}
.toolbar.props {
  height: 30px;
}
.tools {
  display: flex;
  align-items: center;
  gap: 6px;
  padding-left: 4px;
}
.grip {
  width: 2px;
  height: 18px;
  background: repeating-linear-gradient(#7586a0 0 2px, transparent 2px 4px);
}
.divider {
  width: 1px;
  height: 15px;
  background: #a4adba;
}
.props > .divider {
  margin: 0 4px;
}
.spell {
  width: 18px;
  font-size: 8px;
  font-weight: bold;
  line-height: 8px;
}
.spell svg {
  display: block;
  width: 18px;
  height: 10px;
}
.text-tools {
  margin-left: auto;
}
.style-select,
.line-combo select {
  font-family: 'Liberation Mono', monospace;
  font-size: 11px;
}
.style-select {
  width: 37px;
  height: 25px;
  padding-left: 3px;
  background: #fff;
}
.dock {
  width: 34px;
  gap: 1px;
  margin-left: 10px;
  padding-left: 6px;
}
.combo {
  display: flex;
  align-items: center;
  height: 26px;
  background: #fff;
}
.layer-combo {
  width: 204px;
  margin-left: 4px;
}
.layer-combo select {
  flex: 1;
  padding-left: 6px;
}
.layer-combo .arrow {
  width: 15px;
  height: 24px;
  background: #e2e9f4;
}
.swatch {
  width: 13px;
  height: 12px;
  margin-left: 2px;
  border: 1px solid #222;
}
.arrow {
  display: flex;
  align-items: center;
  justify-content: center;
}
.arrow::before {
  content: '';
  border: 3px solid transparent;
  border-top: 4px solid #111;
  border-bottom: 0;
}
.arrow.up {
  transform: rotate(180deg);
}
.line-combo {
  flex: 1;
  padding-left: 6px;
}
.color {
  width: 130px;
  height: 18px;
  border: 1px solid #222;
}
.rule {
  flex: 1;
  height: 1px;
  margin-left: 20px;
  background: #111;
}
.line-combo select {
  width: 92px;
  padding-left: 2px;
}

/* workspace */
.workspace {
  display: flex;
  flex: 1;
  min-height: 0;
  padding-bottom: 8px;
}
.sidebar {
  display: flex;
  flex-direction: column;
  align-items: center;
  flex: none;
  width: 34px;
  gap: 5px;
  padding: 3px 5px 0 0;
  background: linear-gradient(90deg, #f6f9fd, #dfe7f3);
}
.sidebar button {
  flex: none;
  width: 18px;
  height: 18px;
}
.sidebar hr {
  width: 16px;
  margin: -1px 0 0;
  border: 0;
  border-top: 1px solid #8d97a6;
}
.dots {
  flex: none;
  width: 28px;
  height: 2px;
  background: repeating-linear-gradient(90deg, #8492a8 0 2px, transparent 2px 4px);
}
.hatch {
  flex: none;
  width: 16px;
  height: 3px;
  background: repeating-linear-gradient(120deg, #333 0 1px, transparent 1px 3px);
}
.sidebar.right {
  padding-right: 4px;
}
.drawing {
  display: flex;
  flex-direction: column;
  flex: 1;
  min-width: 0;
  border: 1px solid #9aa5b5;
  border-width: 0 0 1px 1px;
}
.doc-tabs {
  display: flex;
  height: 24px;
}
.slope {
  width: 26px;
  height: 24px;
}
.doc-tab {
  display: flex;
  align-items: center;
  gap: 12px;
  padding-right: 6px;
  border: 1px solid #9aa5b5;
  border-width: 1px 1px 0 0;
  background: #fff;
  font-weight: bold;
}
.doc-tab svg {
  display: block;
  width: 9px;
  height: 9px;
  fill: none;
  stroke: #111;
  stroke-width: 1.5;
}
.canvas {
  display: flex;
  align-items: flex-end;
  flex: 1;
  margin-left: 1px;
  padding: 0 0 6px 8px;
  background: #000;
}
.ucs {
  width: 60px;
  height: 64px;
  font-size: 9px;
}
.ucs text {
  fill: #ddd;
}
.sheets {
  display: flex;
  align-items: center;
  height: 18px;
  background: #fff;
  font-family: 'Liberation Mono', monospace;
  font-size: 11px;
}
.nav {
  width: 17px;
  height: 16px;
  border: 1px solid #aaa;
  border-width: 0 1px 1px 0;
  background: #f0f0f0;
}
.nav svg {
  display: block;
  width: 9px;
  height: 9px;
  margin: auto;
}
.edge {
  width: 8px;
  height: 16px;
  fill: none;
  stroke: #222;
}
.sheet {
  padding: 0 5px;
}
.sheet.current {
  padding: 0;
  font-size: 12px;
  font-weight: bold;
}

/* palette */
.palette {
  display: flex;
  flex-direction: column;
  flex: none;
  width: 141px;
  border: 1px solid #222;
  border-left: 4px solid #222;
  background: #fff;
}
.palette h2 {
  display: flex;
  align-items: center;
  flex: none;
  height: 20px;
  padding-left: 3px;
  gap: 7px;
  background: linear-gradient(90deg, #8c8c8c, #aaa);
  font-size: 16px;
  font-weight: bold;
}
.palette h2 .grip {
  width: 4px;
  height: 14px;
  background: repeating-linear-gradient(#333 0 1px, transparent 1px 3px);
}
.palette-body {
  display: flex;
  flex: 1;
  min-height: 0;
}
.palette-tabs {
  display: flex;
  flex-direction: column;
  width: 21px;
  border-right: 1px solid #777;
}
.palette-tabs > button {
  height: 54px;
  writing-mode: vertical-rl;
  text-orientation: sideways;
  transform: rotate(180deg);
  white-space: nowrap;
}
.palette-tabs .selected {
  border-top: 1px solid #222;
}
.palette-tabs .long {
  height: 104px;
}
.palette-tabs .last {
  flex: 1;
  min-height: 0;
}
.spin button {
  display: flex;
  align-items: center;
  justify-content: center;
  width: 20px;
  height: 15px;
  border: 1px solid #bbb;
  background: #f2f2f2;
}
.palette-list {
  flex: 1;
  padding-top: 2px;
  overflow: hidden;
}
.palette-list button {
  display: flex;
  align-items: center;
  width: 100%;
  height: 38px;
  padding-left: 4px;
  gap: 4px;
  white-space: nowrap;
}
.palette-list svg {
  flex: none;
  width: 32px;
  height: 32px;
}
.scroll {
  display: flex;
  flex-direction: column;
  align-items: center;
  width: 17px;
  padding: 7px 0;
}
.scroll svg {
  width: 10px;
  height: 6px;
  fill: none;
  stroke: #222;
  stroke-width: 1.6;
}
.thumb {
  width: 15px;
  height: 86px;
  margin: 16px 0 auto;
  background: #d6d6d6;
}

/* status */
.statusbar {
  display: flex;
  align-items: center;
  flex: none;
  height: 19px;
  padding: 0 2px 0 3px;
  gap: 1px;
  border-top: 1px solid #8f99a8;
  background: linear-gradient(#e6eaf0, #c3cad4);
}
.hint {
  margin-right: auto;
}
.statusbar button {
  display: flex;
  align-items: center;
  height: 18px;
  padding: 0 1px;
  gap: 3px;
  border-left: 1px solid #8a93a0;
}
.statusbar .on {
  background: #fff22a;
}
.resize {
  width: 9px;
  height: 9px;
  align-self: flex-end;
  fill: #333;
}
```
